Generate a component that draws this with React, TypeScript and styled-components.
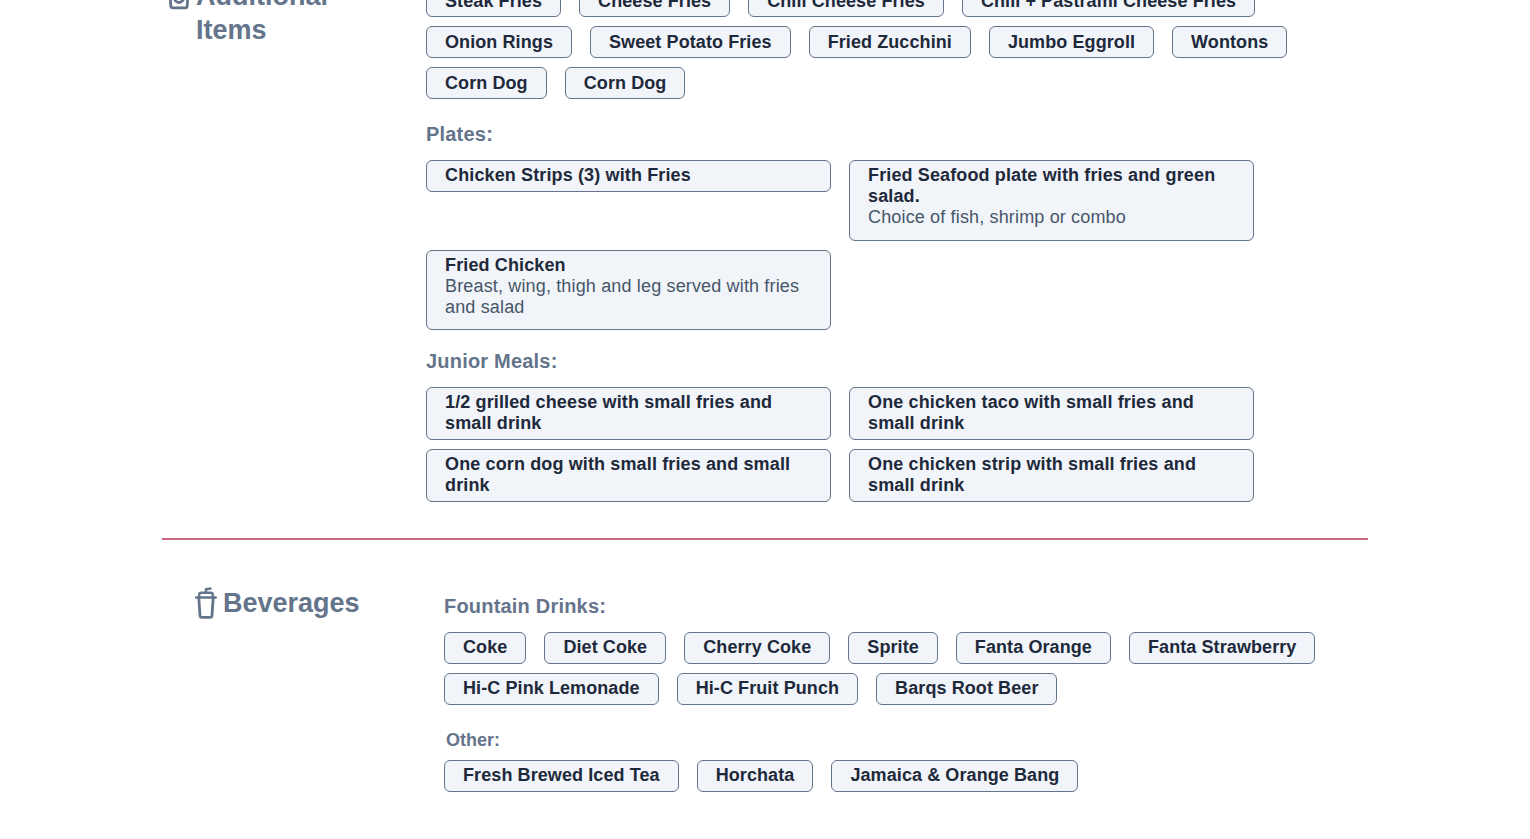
import styled, { createGlobalStyle } from "styled-components";

const sections = {
  fries: ["Steak Fries", "Cheese Fries", "Chili Cheese Fries", "Chili + Pastrami Cheese Fries", "Onion Rings", "Sweet Potato Fries", "Fried Zucchini", "Jumbo Eggroll", "Wontons", "Corn Dog", "Corn Dog"],
  fountain: ["Coke", "Diet Coke", "Cherry Coke", "Sprite", "Fanta Orange", "Fanta Strawberry", "Hi-C Pink Lemonade", "Hi-C Fruit Punch", "Barqs Root Beer"],
  other: ["Fresh Brewed Iced Tea", "Horchata", "Jamaica & Orange Bang"],
};

const plates = [
  { name: "Chicken Strips (3) with Fries" },
  { name: "Fried Seafood plate with fries and green salad.", desc: "Choice of fish, shrimp or combo" },
  { name: "Fried Chicken", desc: "Breast, wing, thigh and leg served with fries and salad" },
];

const juniorMeals = [
  "1/2 grilled cheese with small fries and small drink",
  "One chicken taco with small fries and small drink",
  "One corn dog with small fries and small drink",
  "One chicken strip with small fries and small drink",
];

const BagIcon = () => (
  <IconSvg width="22" height="30" viewBox="0 0 22 30" fill="none" stroke="#64748b" strokeWidth="2.8" strokeLinejoin="round">
    <path d="M1.500 6h19l-1.300 20a2 2 0 0 1-2 1.800H4.800a2 2 0 0 1-2-1.800z" />
    <path d="M6.200 17a4.800 5.500 0 0 0 9.600 0" />
  </IconSvg>
);

const CupIcon = () => (
  <IconSvg width="22" height="32" viewBox="0 0 22 32" fill="none" stroke="#64748b" strokeLinecap="round" strokeLinejoin="round">
    <path strokeWidth="2.400" d="M1.200 10.500h19.600" />
    <path strokeWidth="2.800" d="M3.800 10.800l1.200 17.700a2 2 0 0 0 2 1.900h8a2 2 0 0 0 2-1.900l1.200-17.700" />
    <path strokeWidth="2.400" d="M4.200 9.500V7.800a2 2 0 0 1 2-2h9.600a2 2 0 0 1 2 2v1.700" />
    <path strokeWidth="2.400" d="M11 5.500V2.300l4.500-.8" />
  </IconSvg>
);

export default function App() {
  return (
    <>
      <GlobalStyle />
      <Page>
        <Section $labelWidth={264}>
          <SectionTitle $indent={6}>
            <BagIcon />
            <span>Additional Items</span>
          </SectionTitle>
          <Content $top={5.4}>
            <Chips>
              {sections.fries.map((item, i) => (
                <Chip key={i}>{item}</Chip>
              ))}
            </Chips>
            <GroupTitle $top={22.4}>Plates:</GroupTitle>
            <Cards>
              {plates.map((plate) => (
                <Card key={plate.name}>
                  {plate.name}
                  {plate.desc && <Description>{plate.desc}</Description>}
                </Card>
              ))}
            </Cards>
            <GroupTitle $top={18.6}>Junior Meals:</GroupTitle>
            <Cards>
              {juniorMeals.map((meal) => (
                <Card key={meal}>{meal}</Card>
              ))}
            </Cards>
          </Content>
        </Section>
        <Divider />
        <Section $labelWidth={282}>
          <SectionTitle $indent={33}>
            <CupIcon />
            <span>Beverages</span>
          </SectionTitle>
          <Content $top={7}>
            <GroupTitle $top={0}>Fountain Drinks:</GroupTitle>
            <Chips>
              {sections.fountain.map((item) => (
                <Chip key={item}>{item}</Chip>
              ))}
            </Chips>
            <SubTitle>Other:</SubTitle>
            <Chips>
              {sections.other.map((item) => (
                <Chip key={item}>{item}</Chip>
              ))}
            </Chips>
          </Content>
        </Section>
      </Page>
    </>
  );
}

const GlobalStyle = createGlobalStyle`
  html, body {
    margin: 0;
    height: 839px;
    overflow: hidden;
    background: #fff;
    font-family: "Liberation Sans", Arial, sans-serif;
  }
`;
const Page = styled.main`
  width: 1206px;
  margin: -20px auto 0;
`;
const Section = styled.section<{ $labelWidth: number }>`
  display: grid;
  grid-template-columns: ${(p) => p.$labelWidth}px 1fr;
  align-items: start;
`;
const SectionTitle = styled.h2<{ $indent: number }>`
  display: flex;
  align-items: flex-start;
  gap: 6px;
  margin: 0;
  padding-left: ${(p) => p.$indent}px;
  width: 190px;
  color: #64748b;
  font-size: 27px;
  line-height: 33.75px;
  font-weight: 700;
`;
const IconSvg = styled.svg`
  flex: none;
`;
const Content = styled.div<{ $top: number }>`
  min-width: 0;
  padding-top: ${(p) => p.$top}px;
`;
const Chips = styled.div`
  display: flex;
  flex-wrap: wrap;
  gap: 9px 18px;
`;
const Chip = styled.div`
  box-sizing: border-box;
  padding: 4.5px 18px;
  border: 1px solid #64748b;
  border-radius: 6px;
  background: #f1f5f9;
  color: #1e293b;
  font-size: 18px;
  line-height: 21px;
  font-weight: 700;
  letter-spacing: 0.09px;
`;
const GroupTitle = styled.h3<{ $top: number }>`
  margin: ${(p) => p.$top}px 0 13px;
  color: #64748b;
  font-size: 20px;
  line-height: 25px;
  font-weight: 700;
  letter-spacing: 0.2px;
`;
const SubTitle = styled.h4`
  margin: 25px 0 9px 2px;
  color: #64748b;
  font-size: 18px;
  line-height: 21px;
  font-weight: 700;
`;
const Cards = styled.div`
  display: grid;
  grid-template-columns: repeat(2, 405px);
  gap: 9px 18px;
  align-items: start;
`;
const Card = styled(Chip)`
  letter-spacing: 0.13px;
`;
const Description = styled.p`
  margin: 0 0 6.8px;
  color: #475569;
  font-weight: 400;
  letter-spacing: 0.155px;
`;
const Divider = styled.hr`
  margin: 36px 0 47px;
  border: 0;
  height: 2px;
  background: #c9677f;
`;
